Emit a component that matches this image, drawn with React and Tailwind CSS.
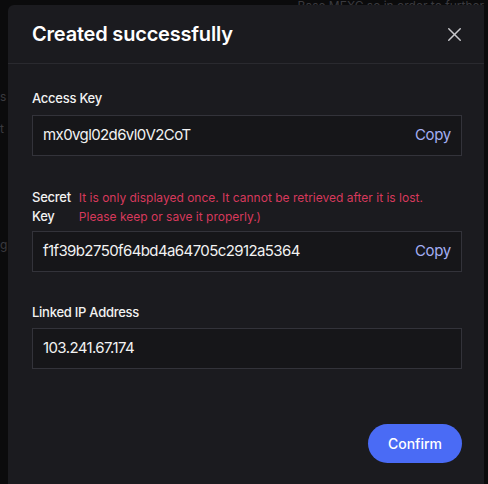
import React from "react";
import { X } from "lucide-react";

const KeyField = ({ value, copy }) => (
  <div className="flex h-[41px] items-center justify-between border border-[#33333a] bg-[#161619] pl-[10px] pr-[10px]">
    <span className="text-[15px] tracking-[-0.04em] text-[#f2f2f2]">{value}</span>
    {copy && <span className="text-[15px] tracking-[-0.02em] text-[#a3aef2]">Copy</span>}
  </div>
);

export default function App() {
  return (
    <div
      className="relative h-[484px] w-[488px] overflow-hidden bg-[#0b0b0c] pl-[8px] pt-[5px]"
      style={{ fontFamily: "Inter, 'Noto Sans', sans-serif" }}
    >
      <div className="absolute right-[4px] top-0 text-[12px] leading-[12px] text-[#3a3a3f]">
        Base MEXC so in order to further
      </div>
      <div className="absolute left-0 top-[88px] text-[12px] text-[#3a3a3f]">s</div>
      <div className="absolute left-0 top-[120px] text-[12px] text-[#3a3a3f]">t</div>
      <div className="absolute left-0 top-[236px] text-[12px] text-[#3a3a3f]">g</div>

      <div className="relative h-[500px] w-[476px] rounded-tl-[6px] bg-[#1b1b1f]">
        <div className="flex h-[59px] items-center justify-between border-b border-[#2a2a2f] pl-6 pr-[18px]">
          <h2 className="text-[20px] font-semibold tracking-[-0.01em] text-white">Created successfully</h2>
          <X size={23} strokeWidth={1.5} className="text-[#c8c8cc]" />
        </div>

        <div className="pl-6 pr-[22px] pt-[24px]">
          <div className="mb-[7px] text-[13px] font-medium leading-5 tracking-[-0.02em] text-[#f2f2f2]">
            Access Key
          </div>
          <KeyField value="mx0vgl02d6vl0V2CoT" copy />

          <div className="mb-[5px] mt-[32px] flex gap-[8px] leading-[19px]">
            <span className="text-[13px] font-medium tracking-[-0.02em] text-[#f2f2f2]">
              Secret
              <br />
              Key
            </span>
            <span className="text-[12px] text-[#d7395c]">
              It is only displayed once. It cannot be retrieved after it is lost.
              <br />
              Please keep or save it properly.)
            </span>
          </div>
          <KeyField value="f1f39b2750f64bd4a64705c2912a5364" copy />

          <div className="mb-[6px] mt-[30px] text-[13px] font-medium leading-5 tracking-[-0.02em] text-[#f2f2f2]">
            Linked IP Address
          </div>
          <KeyField value="103.241.67.174" />

          <div className="mt-[55px] flex justify-end">
            <button className="h-[39px] w-[94px] rounded-full bg-[#4a6bf5] text-[14px] font-medium text-white">
              Confirm
            </button>
          </div>
        </div>
      </div>
    </div>
  );
}
